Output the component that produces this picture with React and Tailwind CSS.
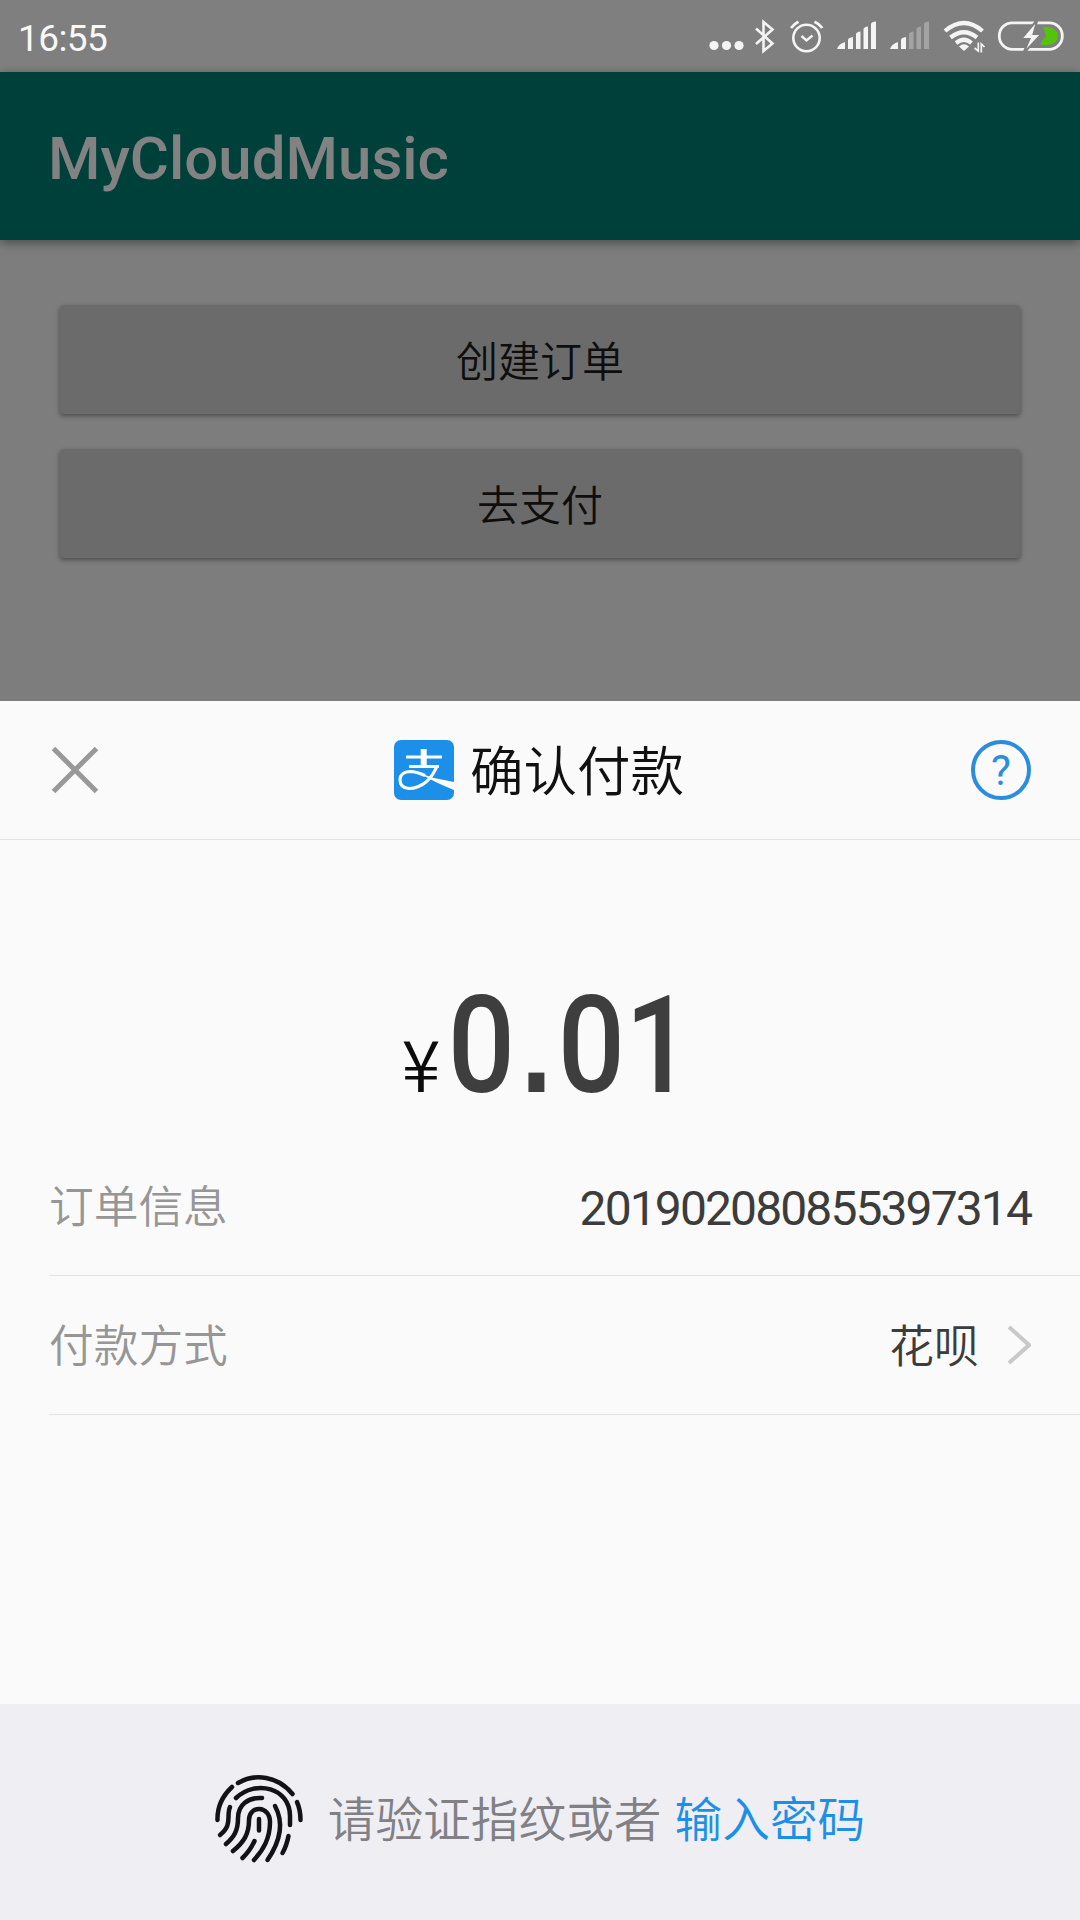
const StatusIcons = () => (
  <svg width="390" height="72" viewBox="0 0 390 72" fill="none" stroke="#f4f4f4">
    <g fill="#f4f4f4" stroke="none">
      <circle cx="24" cy="45.5" r="4.6" />
      <circle cx="36.5" cy="45.5" r="4.6" />
      <circle cx="49" cy="45.5" r="4.6" />
    </g>
    {/* bluetooth */}
    <path d="M66 28.5 L82.5 43.5 L73.5 51 V22 L82.5 29.5 L66 44" strokeWidth="2.6" />
    {/* alarm */}
    <circle cx="116.5" cy="38" r="13.2" strokeWidth="2.6" />
    <path d="M111.5 36 L116.5 40.5 L122.5 35.5" strokeWidth="2.4" />
    <path d="M101 28 Q104 24 108.5 21.8 M124.5 21.8 Q129.5 24 132.3 28" strokeWidth="2.8" />
    {/* signal */}
    <g fill="#f4f4f4" stroke="none">
      <path d="M147 49 Q148.5 44 155 42 V49 Z" />
      <path d="M158 49 V39.5 Q158.5 37.7 163 37 V49 Z" />
      <path d="M166 49 V34 Q166.5 32 170.5 31.5 V49 Z" />
      <path d="M173.5 49 V29 Q174 27 178 26.5 V49 Z" />
      <path d="M181 49 V24 Q181.5 21.8 186 21.5 V49 Z" />
      <path d="M200 49 Q201.5 44 208 42 V49 Z" />
      <path d="M211 49 V39.5 Q211.5 37.7 216 37 V49 Z" />
    </g>
    <g fill="#a3a3a3" stroke="none">
      <path d="M219 49 V34 Q219.5 32 223.5 31.5 V49 Z" />
      <path d="M226.5 49 V29 Q227 27 231 26.5 V49 Z" />
      <path d="M234 49 V24 Q234.5 21.8 239 21.5 V49 Z" />
    </g>
    {/* wifi */}
    <path d="M255 31 Q274 15 292.5 31" strokeWidth="4.2" />
    <path d="M260.5 37.5 Q274 27 287 37.5" strokeWidth="4.2" />
    <path d="M266 43 Q274 36.5 281.5 43" strokeWidth="4.2" />
    <path d="M269 46.5 Q274 42 279 46.5 L274 51 Z" fill="#f4f4f4" stroke="none" />
    <path d="M288.3 42.5 V51 L284.5 48 M291.3 52.5 V44 L294.5 47" strokeWidth="1.7" />
    {/* battery */}
    <path d="M351 45 V42 L356 36 L353 27 H358 Q368 28.5 368 36 Q368 43.5 358 45 Z" fill="#51c40b" stroke="none" />
    <rect x="309.3" y="22.8" width="63" height="26.5" rx="13" strokeWidth="2.8" />
    <path d="M347.5 19.5 L331 39 H339.5 L333 54 L351.5 34 H343.5 Z" fill="#f4f4f4" stroke="#7f7f7f" strokeWidth="2" />
  </svg>
)

const AlipayLogo = () => (
  <svg width="60" height="60" viewBox="0 0 60 60" fill="none">
    <rect width="60" height="60" rx="7" fill="#1c8fe8" />
    <g stroke="#fff">
      <path d="M12 17 H48 M15 26.5 H45" strokeWidth="3" />
      <path d="M29.7 9 V26" strokeWidth="6" />
      <path d="M43 26 Q39 36 32 42 Q24 48.5 15 48.5 Q6 48 6 39.5 Q6.5 32 16 31.5 Q22 31.5 31 35.5" strokeWidth="3.2" />
    </g>
    <path d="M22 32 Q34 36 40 38 L60 42 V50 Q45 44 36 39 Q27 34 20 32.5 Z" fill="#fff" />
  </svg>
)

const Fingerprint = () => (
  <svg className="-mt-2" width="90" height="94" viewBox="0 0 90 94" fill="none" stroke="#121218" strokeWidth="4.5" strokeLinecap="round">
    <path d="M23 12 C40 2 63 5 77.5 23" />
    <path d="M17 16 Q2 30 2.5 49" />
    <path d="M82 31 Q85.5 39 85.5 49" />
    <path d="M21 27 C41 8 75 17 75 45 V54" />
    <path d="M73.5 65 Q71.5 75 67.5 82" />
    <path d="M15 36 C11 45 18 54 5 64" />
    <path d="M47 27 C33 26 23 34 23 47 C23 60 19 66 11 73" />
    <path d="M18 80 C29 71 34 63 34 49 C34 34 55 34 55 51 C55 68 48 79 39 89" />
    <path d="M60 35 C72 57 60 78 52.5 89" />
    <path d="M44 48 V59.5" />
    <path d="M39.5 70 Q35 80 27.5 87" />
  </svg>
)

const ActionButton = ({ children }) => (
  <button className="h-[109px] w-full rounded-[4px] bg-[#6b6b6b] pt-[6px] text-[42px] leading-none font-[350] text-[#0e0e0e] shadow-[0_2px_5px_rgba(0,0,0,0.4)]">
    {children}
  </button>
)

const InfoRow = ({ label, children }) => (
  <div className="ml-[49px] flex h-[139px] items-center justify-between border-b border-[#e3e3e3] pt-[5px] pr-[49px]">
    <span className="text-[44.7px] leading-none font-[350] text-[#969696]">{label}</span>
    {children}
  </div>
)

const App = () => {
  return (
    <div className="flex h-[1920px] w-[1080px] flex-col overflow-hidden bg-[#7d7d7d] font-[Roboto,'Noto_Sans_CJK_SC',sans-serif]">
      <div className="flex h-[72px] shrink-0 items-center justify-between bg-[#7f7f7f] pl-[18px]">
        <span className="pt-[4px] text-[37px] leading-none tracking-[-0.6px] text-[#f8f8f8]">16:55</span>
        <StatusIcons />
      </div>

      <header className="flex h-[168px] shrink-0 items-center bg-[#00403a] pt-[5px] pl-[48px] shadow-[0_3px_10px_rgba(0,0,0,0.4)]">
        <h1 className="text-[60px] leading-none font-medium text-[#828282]">MyCloudMusic</h1>
      </header>

      <main className="flex h-[461px] shrink-0 flex-col gap-[35px] px-[60px] pt-[65px]">
        <ActionButton>创建订单</ActionButton>
        <ActionButton>去支付</ActionButton>
      </main>

      <section className="flex flex-1 flex-col bg-[#fafafa]">
        <div className="flex h-[139px] shrink-0 items-center justify-between border-b border-[#e3e3e3] pr-[49px] pl-[51px]">
          <svg width="48" height="48" viewBox="0 0 48 48" stroke="#999" strokeWidth="5">
            <path d="M2.5 2.5 L45.5 45.5 M45.5 2.5 L2.5 45.5" />
          </svg>
          <div className="flex items-center gap-[16px] pb-px pl-[8px]">
            <AlipayLogo />
            <h2 className="pt-[7px] text-[53.5px] leading-none font-[350] text-[#111]">确认付款</h2>
          </div>
          <div className="flex size-[60px] items-center justify-center rounded-full border-4 border-[#2a8ddd] pt-[2px] text-[42px] leading-none text-[#2a8ddd]">
            ?
          </div>
        </div>

        <div className="flex h-[297px] shrink-0 items-end justify-center pr-[10px] pb-[23px]">
          <div className="flex items-baseline">
            <span className="font-['Noto_Sans_CJK_SC',sans-serif] text-[71px] leading-none font-[350] text-[#0c0c0c]">¥</span>
            <span className="w-[228px] origin-left scale-x-[0.87] pl-[9px] text-[136px] leading-none font-medium whitespace-nowrap text-[#3e3e3e]">
              0<span className="inline-block w-[49px] text-center font-['Liberation_Sans',sans-serif] text-[130px] leading-none font-bold">.</span>01
            </span>
          </div>
        </div>

        <InfoRow label="订单信息">
          <span className="text-[48px] leading-none tracking-[-1.9px] text-[#3c3c3c]">201902080855397314</span>
        </InfoRow>
        <InfoRow label="付款方式">
          <div className="flex items-center gap-[28px] text-[45px] leading-none font-[350] text-[#3c3c3c]">
            花呗
            <svg className="-mt-[6px]" width="24" height="40" viewBox="0 0 24 40" fill="none" stroke="#c9c9c9" strokeWidth="4">
              <path d="M2 2 L22 20 L2 38" />
            </svg>
          </div>
        </InfoRow>

        <footer className="mt-auto flex h-[216px] items-center justify-center bg-[#eeeef3] pt-[19px] text-[47.7px] leading-none font-[350]">
          <Fingerprint />
          <span className="ml-[23px] text-[#808085]">请验证指纹或者</span>
          <span className="ml-[13px] text-[#1c8fe8]">输入密码</span>
        </footer>
      </section>
    </div>
  )
}

export default App
